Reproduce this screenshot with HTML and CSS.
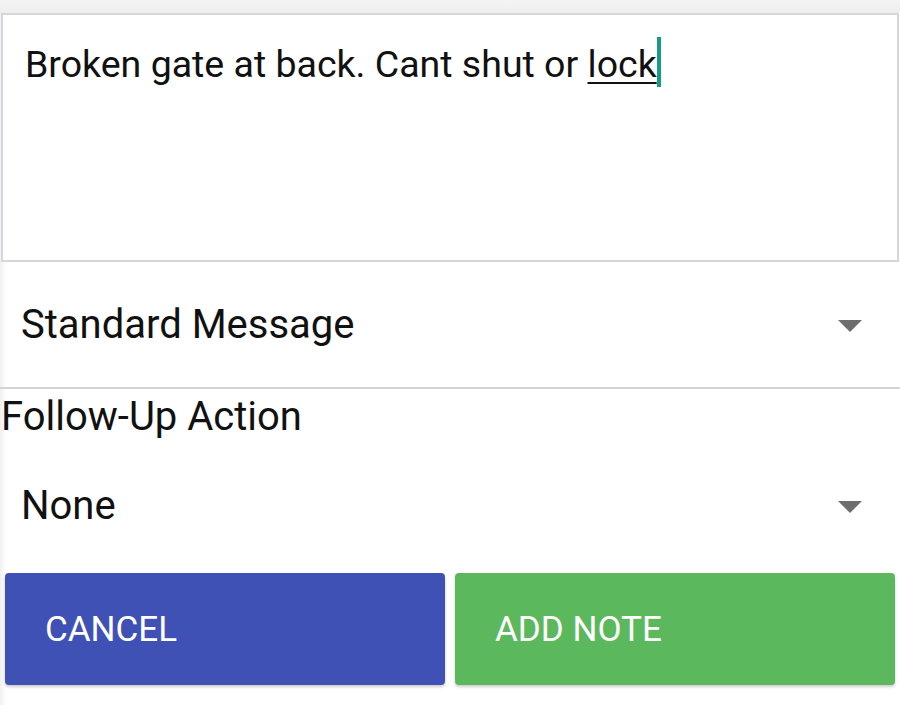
FILE: index.html
```html
<!DOCTYPE html>
<html lang="en">
<head>
  <meta charset="UTF-8" />
  <meta name="viewport" content="width=device-width, initial-scale=1.0" />
  <title>Add Note</title>
  <link rel="stylesheet" href="styles.css">
</head>
<body>
  <div class="screen">
    <div class="top-band"></div>
    <div class="note-box">
      <p class="note-text">Broken gate at back. Cant shut or <span class="word">lock</span><span class="caret"></span></p>
    </div>

    <div class="select">
      <span class="select-value">Standard Message</span>
      <span class="arrow"></span>
    </div>

    <label class="field-label">Follow-Up Action</label>
    <div class="select select-plain">
      <span class="select-value">None</span>
      <span class="arrow"></span>
    </div>

    <div class="actions">
      <button class="btn btn-cancel">CANCEL</button>
      <button class="btn btn-add">ADD NOTE</button>
    </div>
  </div>
</body>
</html>
```

FILE: styles.css
```css
* {
  margin: 0;
  padding: 0;
  box-sizing: border-box;
}

body {
  font-family: Roboto, 'Noto Sans', sans-serif;
  background: #ffffff;
  color: #111111;
  width: 900px;
  height: 705px;
  overflow: hidden;
}

.screen {
  display: flex;
  flex-direction: column;
  height: 705px;
  background: linear-gradient(to right, #f0f0f0 0, #ffffff 6px);
}

.top-band {
  height: 13px;
  flex-shrink: 0;
  background: linear-gradient(to bottom, #f4f4f4, #eeeeee);
}

.note-box {
  height: 249px;
  flex-shrink: 0;
  margin: 0 1px;
  border: 2px solid #d6d6da;
  background: #ffffff;
  padding: 25px 0 0 22px;
}

.note-text {
  font-size: 37.5px;
  line-height: 48px;
  display: flex;
  align-items: flex-start;
  white-space: pre;
}

.word {
  text-decoration: underline;
  text-decoration-thickness: 2px;
  text-underline-offset: 5px;
}

.caret {
  display: inline-block;
  width: 4px;
  height: 50px;
  margin-top: -3px;
  background: #149c86;
}

.select {
  display: flex;
  align-items: center;
  justify-content: space-between;
  height: 127px;
  flex-shrink: 0;
  padding: 0 38px 0 21px;
  border-bottom: 2px solid #d4d4d4;
}

.select-value {
  font-size: 40px;
  line-height: 48px;
}

.arrow {
  width: 0;
  height: 0;
  margin-top: 2px;
  border-left: 12px solid transparent;
  border-right: 12px solid transparent;
  border-top: 12px solid #6e6e6e;
}

.field-label {
  font-size: 40px;
  line-height: 48px;
  padding: 4px 0 0 1px;
}

.select-plain {
  height: 130px;
  border-bottom: none;
}

.actions {
  display: flex;
  gap: 10px;
  padding: 0 5px;
  margin-top: 2px;
}

.btn {
  flex: 1;
  height: 112px;
  border: none;
  border-radius: 4px;
  color: #ffffff;
  font-family: Roboto, 'Noto Sans', sans-serif;
  font-size: 35px;
  text-align: left;
  padding-left: 40px;
  box-shadow: 0 2px 3px rgba(0, 0, 0, 0.2);
}

.btn-cancel {
  background: #3f51b5;
}

.btn-add {
  background: #5cb85c;
}
```
